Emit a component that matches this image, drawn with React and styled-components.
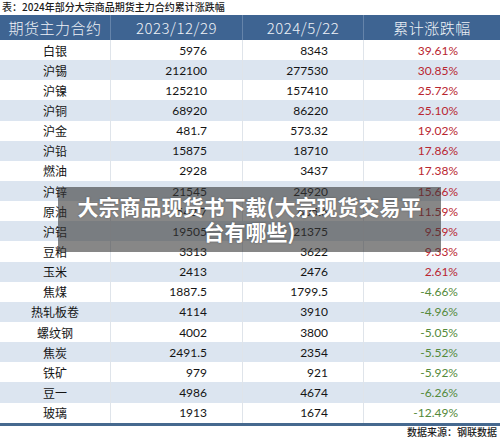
import styled, { createGlobalStyle } from 'styled-components'

const rows = [
  ['白银', '5976', '8343', '39.61%'],
  ['沪锡', '212100', '277530', '30.85%'],
  ['沪镍', '125210', '157410', '25.72%'],
  ['沪铜', '68920', '86220', '25.10%'],
  ['沪金', '481.7', '573.32', '19.02%'],
  ['沪铅', '15875', '18710', '17.86%'],
  ['燃油', '2928', '3437', '17.38%'],
  ['沪锌', '21545', '24920', '15.66%'],
  ['原油', '542.7', '605.6', '11.59%'],
  ['沪铝', '19505', '21375', '9.59%'],
  ['豆粕', '3313', '3622', '9.33%'],
  ['玉米', '2413', '2476', '2.61%'],
  ['焦煤', '1887.5', '1799.5', '-4.66%'],
  ['热轧板卷', '4114', '3910', '-4.96%'],
  ['螺纹钢', '4002', '3800', '-5.05%'],
  ['焦炭', '2491.5', '2354', '-5.52%'],
  ['铁矿', '979', '921', '-5.92%'],
  ['豆一', '4986', '4674', '-6.26%'],
  ['玻璃', '1913', '1674', '-12.49%'],
]

export default function App() {
  return (
    <>
      <GlobalStyle />
      <Page>
        <Caption>表：2024年部分大宗商品期货主力合约累计涨跌幅</Caption>
        <Table>
          <HeadRow>
            <HeadCell>期货主力合约</HeadCell>
            <HeadCell>2023/12/29</HeadCell>
            <HeadCell>2024/5/22</HeadCell>
            <HeadCell>累计涨跌幅</HeadCell>
          </HeadRow>
          {rows.map((r, i) => (
            <Row key={r[0]} shaded={i % 2 === 1}>
              <NameCell>{r[0]}</NameCell>
              <NumCell pad={35}>{r[1]}</NumCell>
              <NumCell pad={35}>{r[2]}</NumCell>
              <Change pad={42} down={r[3].startsWith('-')}>{r[3]}</Change>
            </Row>
          ))}
        </Table>
        <Source>数据来源：钢联数据</Source>
        <Overlay>大宗商品现货书下载(大宗现货交易平台有哪些)</Overlay>
      </Page>
    </>
  )
}

const GlobalStyle = createGlobalStyle`
body {
  margin: 0;
  background: #fff;
  font-family: Lato, "Noto Sans CJK SC", sans-serif;
}
`

const Page = styled.div`
position: relative;
width: 500px;
height: 439px;
overflow: hidden;
background: #fff;
`

const Caption = styled.div`
height: 15px;
line-height: 13px;
padding-left: 2px;
font-size: 10px;
font-weight: 500;
color: #1c1c1c;
font-family: "Noto Sans CJK SC", sans-serif;
`

const Table = styled.div`
display: flex;
flex-direction: column;
border-bottom: 3px solid #46698f;
`

const cols = `
display: grid;
grid-template-columns: 110px 132px 121px 137px;
`

const HeadRow = styled.div`
${cols}
height: 25px;
background: #3e6492;
`

const HeadCell = styled.div`
display: flex;
align-items: center;
justify-content: center;
font-family: "Noto Sans CJK SC", sans-serif;
font-size: 15px;
font-weight: 300;
letter-spacing: 0.5px;
color: #eef2f7;
border-left: 1px solid #6584aa;
&:first-child { border-left: none; }
`

const Row = styled.div`
${cols}
height: 20.15px;
background: ${p => (p.shaded ? '#dce5f0' : '#fff')};
`

const Cell = styled.div`
display: flex;
align-items: center;
font-size: 12px;
color: #141414;
border-left: 1px solid #dfe4ea;
`

const NameCell = styled(Cell)`
justify-content: center;
border-left: none;
`

const NumCell = styled(Cell)`
justify-content: flex-end;
padding-right: ${p => p.pad}px;
`

const Change = styled(NumCell)`
color: ${p => (p.down ? '#548a3a' : '#b92630')};
`

const Source = styled.div`
text-align: right;
padding-right: 3px;
margin-top: -1px;
font-family: "Noto Sans CJK SC", sans-serif;
font-size: 10px;
font-weight: 500;
color: #222;
line-height: 13px;
`

const Overlay = styled.div`
position: absolute;
top: 187px;
left: 58px;
width: 383px;
box-sizing: border-box;
padding: 7px 12px 8px;
background: rgba(55, 55, 55, 0.6);
color: #fff;
font-family: "Noto Sans CJK SC", sans-serif;
font-weight: 700;
font-size: 21px;
line-height: 25px;
text-align: center;
text-shadow: 0 0 2px rgba(0, 0, 0, 0.35);
`
